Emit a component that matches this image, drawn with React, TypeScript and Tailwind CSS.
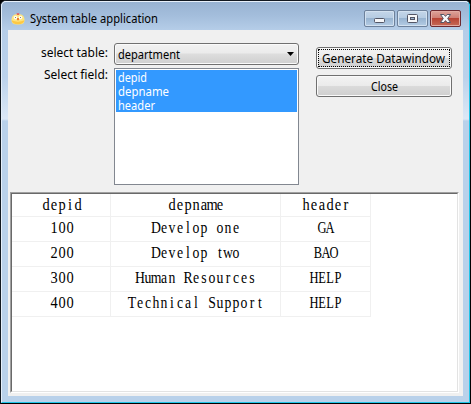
import React from "react";

const rows = [
  ["100", "Develop one", "GA"],
  ["200", "Develop two", "BAO"],
  ["300", "Human Resources", "HELP"],
  ["400", "Technical Support", "HELP"],
];

function Label({ text, width, className = "", height = 18, baseline = 13 }: { text: string; width: number; className?: string; height?: number; baseline?: number }) {
  return (
    <svg width={width} height={height} className={`block shrink-0 overflow-visible ${className}`}>
      <text x={0} y={baseline} textLength={width} lengthAdjust="spacingAndGlyphs" fill="currentColor" fontSize={12}>
        {text}
      </text>
    </svg>
  );
}

const CHAR = 8;

// Serif text on a fixed 8px character grid; all-capital words are squeezed more.
function Cell({ text }: { text: string }) {
  const squeeze = /[A-Z]/.test(text) ? (/[a-z]/.test(text) ? 0.86 : 0.78) : 0.9;
  const xs = Array.from(text, (_, i) => ((i + 0.5) * CHAR) / squeeze).join(" ");
  return (
    <svg width={text.length * CHAR} height={20} className="mx-auto block overflow-visible font-['Liberation_Serif',serif]">
      <text x={xs} y={16} textAnchor="middle" fontSize={16} transform={`scale(${squeeze} 1)`}>
        {text}
      </text>
    </svg>
  );
}

const glass = "bg-[linear-gradient(#c4d6e9_0%,#b5cbe2_47%,#98b4d1_50%,#b4cce4_100%)]";
const button =
  "h-[22px] w-[136px] rounded-[3px] border border-[#707070] bg-[linear-gradient(#f3f3f3_0%,#ebebeb_49%,#dbdbdb_50%,#cfcfcf_100%)] shadow-[inset_0_0_0_1px_#fafafa]";

function Caption({ kind }: { kind: "min" | "max" | "close" }) {
  const close = kind === "close";
  return (
    <button
      className={`flex h-[17px] w-[31px] items-center justify-center rounded-[2px] border ${
        close
          ? "border-[#6d2930] bg-[linear-gradient(#dda39b_0%,#ce7e74_47%,#b84435_50%,#c66a58_100%)] shadow-[inset_0_0_0_1px_#e2aaa2]"
          : `border-[#6d819b] shadow-[inset_0_0_0_1px_#d3e1f0] ${glass}`
      }`}
    >
      <svg width="15" height="13" viewBox="0 0 15 13">
        {kind === "min" && <rect x="2.5" y="6.5" width="10" height="4" rx="1" fill="#f6f7f9" stroke="#535666" />}
        {kind === "max" && (
          <g stroke="#535666">
            <rect x="2.5" y="2.5" width="10" height="8" rx="1" fill="#f6f7f9" />
            <rect x="5.5" y="5.5" width="4" height="2" fill="#9db5d0" />
          </g>
        )}
        {close && (
          <path
            d="M2.5 2.5h3.4l1.6 1.9 1.6-1.9h3.4L9.7 6.5l2.8 4H9.1L7.5 8.6 5.9 10.5H2.5l2.8-4z"
            fill="#f8f8fa"
            stroke="#535666"
            strokeLinejoin="round"
          />
        )}
      </svg>
    </button>
  );
}

export default function App() {
  return (
    <div className="h-[404px] w-[471px] bg-black font-['Noto_Sans','Open_Sans',sans-serif] text-black">
      <div className="h-[404px] w-[471px] rounded-t-[6px] border border-[#111820] border-r-black border-b-black bg-[#b9d1ea]">
        <div className="flex h-[402px] flex-col rounded-t-[5px] border border-t-[#e7f0fa] border-r-[#20c5e8] border-b-[#20c5e8] border-l-[#e5effa] bg-[linear-gradient(#98b3d2_0px,#a4bedc_14px,#b5cde8_28px,#bbd2eb_75px,#dce8f6_117px,#b9d1ea_119px)] px-[6px] pb-[6px]">
          <header className="flex h-7 shrink-0 items-start pt-2 pl-[3px]">
            <svg width="14" height="15" viewBox="0 0 14 15" className="mt-px">
              <path d="M.5 9C.5 5 3 3 7 3s6.500 2 6.500 6-3 4.500-6.500 4.500S.5 13 .5 9z" fill="#ffe57e" />
              <path d="M.6 9.300q6.400 2.700 12.800 0-.6 4-6.400 4T.6 9.300z" fill="#fdc845" />
              <path d="M5.800 4V1.800l1.200.8 1.200-.8V4z" fill="#e4605a" />
              <circle cx="4.500" cy="6.600" r="1.800" fill="#fffdf2" />
              <circle cx="9.500" cy="6.600" r="1.800" fill="#fffdf2" />
              <rect x="4" y="6" width="1" height="1" fill="#8a8078" />
              <rect x="9" y="6" width="1" height="1" fill="#8a8078" />
              <path d="M6 7h2v1.500L7 9.800 6 8.500z" fill="#ef7b31" />
            </svg>
            <Label text="System table application" width={128} className="ml-[5px]" />
            <div className="ml-auto flex gap-[2px] pr-[2px]">
              <Caption kind="min" />
              <Caption kind="max" />
              <Caption kind="close" />
            </div>
          </header>

          <main className="flex min-h-0 grow flex-col bg-[#f0f0f0] px-[2px]">
            <section className="flex h-[162px] shrink-0">
              <div className="flex w-[98px] flex-col items-end pt-[14px]">
                <Label text="select table:" width={67} />
                <Label text="Select field:" width={64} className="mt-1" />
              </div>
              <div className="ml-[6px] flex w-[185px] flex-col gap-[3px] pt-[13px]">
                <div className="flex h-[22px] items-center justify-between rounded-[3px] border border-[#707070] bg-[linear-gradient(#f2f2f2_0%,#ebebeb_45%,#dddddd_50%,#cfcfcf_100%)] pr-1 pl-[3px] shadow-[inset_0_0_0_1px_#fafafa]">
                  <Label text="department" width={62} className="mt-[2px]" />
                  <svg width="7" height="4" viewBox="0 0 7 4"><path d="M0 0h7L3.5 4z" /></svg>
                </div>
                <div className="h-[117px] border border-[#828790] bg-white p-px">
                  <div className="flex h-[42px] flex-col bg-[#3399ff] pl-[2px] text-white">
                    <Label text="depid" width={29} height={14} baseline={12} />
                    <Label text="depname" width={51} height={14} baseline={12} />
                    <Label text="header" width={37} height={14} baseline={12} />
                  </div>
                </div>
              </div>
              <div className="ml-[17px] flex w-[136px] flex-col gap-[6px] pt-[17px]">
                <button className={`${button} p-px`}>
                  <span className="flex h-full items-center justify-center border border-dotted border-black pr-px">
                    <Label text="Generate Datawindow" width={123} height={16} baseline={13} />
                  </span>
                </button>
                <button className={`${button} flex items-center justify-center`}>
                  <Label text="Close" width={27} baseline={14} />
                </button>
              </div>
            </section>

            <section className="h-[201px] w-[449px] border border-t-[#a0a0a0] border-r-white border-b-white border-l-[#a0a0a0]">
              <div className="h-full border border-t-[#696969] border-r-[#e3e3e3] border-b-[#e3e3e3] border-l-[#696969] bg-white">
                <table className="w-[359px] table-fixed border-separate border-spacing-0 text-center">
                  <colgroup>
                    <col className="w-[99px]" />
                    <col className="w-[170px]" />
                    <col className="w-[90px]" />
                  </colgroup>
                  <thead>
                    <tr className="h-[23px]">
                      {["depid", "depname", "header"].map((h) => (
                        <th key={h} className="h-[23px] border-r border-b border-[#f0f0f0] p-0 align-top font-normal first:pl-[2px]">
                          <Cell text={h} />
                        </th>
                      ))}
                    </tr>
                  </thead>
                  <tbody>
                    {rows.map((r) => (
                      <tr key={r[0]} className="h-[25px]">
                        {r.map((c, i) => (
                          <td key={i} className="h-[25px] border-r border-b border-[#f0f0f0] p-0 align-top first:pl-[2px]">
                            <Cell text={c} />
                          </td>
                        ))}
                      </tr>
                    ))}
                  </tbody>
                </table>
              </div>
            </section>
          </main>
        </div>
      </div>
    </div>
  );
}
